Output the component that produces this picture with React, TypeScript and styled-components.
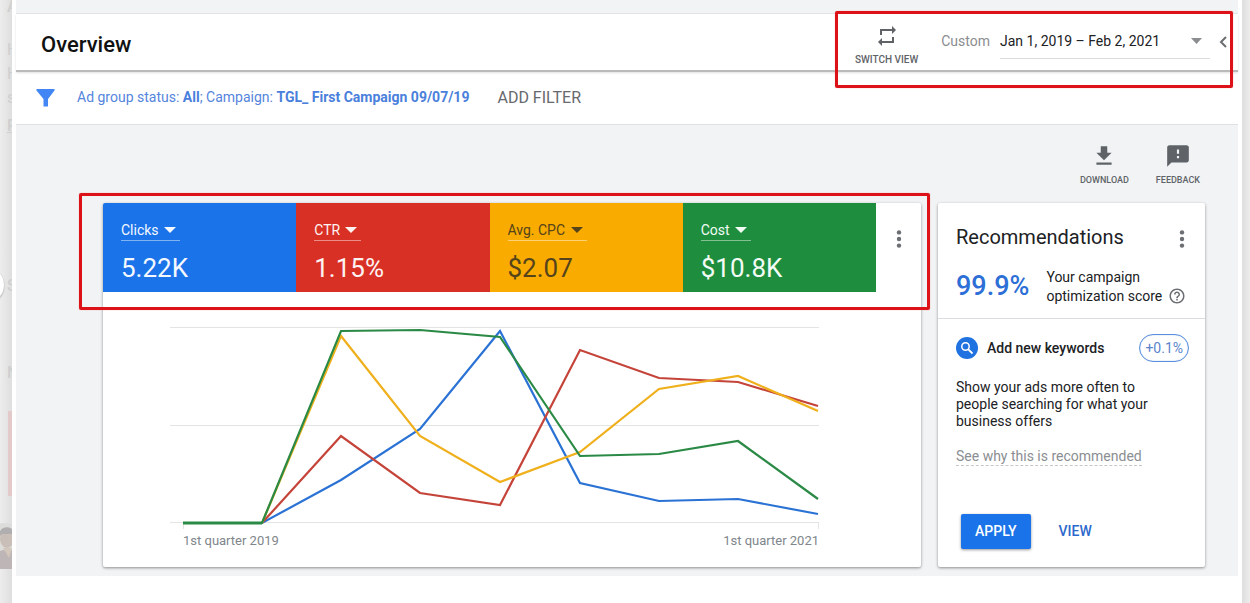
import React from 'react';
import styled, { createGlobalStyle } from 'styled-components';

const GlobalStyle = createGlobalStyle`
  *, *::before, *::after { box-sizing: border-box; }
  body {
    margin: 0;
    background: #ebebeb;
    font-family: Roboto, "Liberation Sans", sans-serif;
    color: #202124;
  }
  button, select { font: inherit; }
`;

const Page = styled.div`
  display: flex;
  min-height: 100vh;
`;

const Gutter = styled.aside<{ $side: 'left' | 'right' }>`
  position: relative;
  flex: none;
  width: ${p => (p.$side === 'left' ? 12 : 8)}px;
  overflow: hidden;
  background: linear-gradient(
    to ${p => (p.$side === 'left' ? 'right' : 'left')},
    #ededed,
    #dedede
  );
`;

const GhostList = styled.div`
  display: flex;
  flex-direction: column;
  width: 40px;
  padding-left: 7px;
  color: #cfcfcf;
`;

const Ghost = styled.span<{ $gap?: number; $strong?: boolean; $underline?: boolean }>`
  margin-top: ${p => p.$gap ?? 0}px;
  font-size: 16px;
  line-height: 24px;
  font-weight: ${p => (p.$strong ? 500 : 400)};
  text-decoration: ${p => (p.$underline ? 'underline' : 'none')};
`;

const GhostBanner = styled.span`
  height: 85px;
  margin: 26px 0 27px 1px;
  background: #e3c9c9;
`;

const Avatar = styled.svg`
  display: block;
  margin-left: -18px;
`;

const Handle = styled.span`
  position: absolute;
  top: 267px;
  left: -32px;
  width: 36px;
  height: 36px;
  border-radius: 50%;
  background: #fff;
  box-shadow: 0 1px 2px rgba(0, 0, 0, 0.3);
`;

const Dialog = styled.main`
  flex: 1;
  min-width: 0;
  padding: 0 4px;
  background: #fff;
`;

const TopStrip = styled.div`
  height: 14px;
  background: #f1f3f4;
  border-bottom: 1px solid #e4e5e8;
`;

const Header = styled.header`
  display: flex;
  align-items: center;
  justify-content: space-between;
  height: 58px;
  padding: 0 11px 0 25px;
  border-bottom: 2px solid #bababa;
  box-shadow: 0 1px 2px rgba(0, 0, 0, 0.12);
`;

const PageTitle = styled.h1`
  margin: 6px 0 0;
  font-size: 22px;
  line-height: 28px;
  font-weight: 500;
  color: #111;
`;

const HeaderTools = styled.div`
  position: relative;
  display: flex;
  align-items: center;
  height: 56px;
`;

const Highlight = styled.span<{ $inset: string }>`
  position: absolute;
  inset: ${p => p.$inset};
  border: 3px solid #dc1218;
  border-radius: 2px;
  box-shadow: 0 0 1px rgba(240, 60, 60, 0.7);
  pointer-events: none;
`;

const IconAction = styled.button<{ $size: number; $gap: number }>`
  display: flex;
  flex-direction: column;
  align-items: center;
  gap: ${p => p.$gap}px;
  padding: 0;
  border: 0;
  background: none;
  color: #5f6368;
  font-size: ${p => p.$size}px;
  line-height: 12px;
  font-weight: 500;
  text-transform: uppercase;
  cursor: pointer;
`;

const SwitchView = styled(IconAction)`
  padding-top: 6px;
`;

const DateField = styled.label`
  display: flex;
  align-items: center;
  gap: 10px;
  margin: 0 0 2px 23px;
  color: #8b8d90;
  font-size: 14px;
  line-height: 20px;
`;

const DateBox = styled.span`
  display: flex;
  align-items: center;
  justify-content: space-between;
  width: 210px;
  height: 36px;
  padding-right: 8px;
  border-bottom: 1px solid #dcdcdc;
`;

const PlainSelect = styled.select`
  appearance: none;
  margin: 0;
  padding: 0;
  border: 0;
  background: none;
  color: inherit;
  cursor: pointer;
`;

const DateSelect = styled(PlainSelect)`
  color: #202124;
`;

const IconButton = styled.button`
  display: flex;
  align-items: center;
  justify-content: center;
  padding: 0;
  border: 0;
  background: none;
  color: #6b6e72;
  cursor: pointer;
`;

const CollapseButton = styled(IconButton)`
  margin-left: 9px;
`;

const CardMenuButton = styled(IconButton)`
  padding-top: 4px;
`;

const FilterBar = styled.section`
  display: flex;
  align-items: center;
  height: 53px;
  padding: 0 20px;
  border-bottom: 1px solid #dfe1e3;
  font-size: 14px;
  line-height: 20px;
`;

const FilterSummary = styled.button`
  margin: 0 28px 0 22px;
  padding: 0 0 2px;
  border: 0;
  background: none;
  color: #5585dc;
  cursor: pointer;

  b {
    font-weight: 700;
    color: #4a80dc;
  }
`;

const AddFilter = styled.button`
  padding: 0;
  border: 0;
  background: none;
  color: #66696d;
  font-size: 16px;
  cursor: pointer;
`;

const Canvas = styled.section`
  padding: 18px 33px 9px 87px;
  background: #f1f3f4;
`;

const Toolbar = styled.div`
  display: flex;
  justify-content: flex-end;
  gap: 27px;
  padding: 0 5px 17px 0;
`;

const Cards = styled.div`
  display: grid;
  grid-template-columns: minmax(0, 1fr) 267px;
  gap: 17px;
`;

const Card = styled.article`
  background: #fff;
  border-radius: 2px;
  box-shadow: 0 1px 3px rgba(0, 0, 0, 0.42);
`;

const Scorecard = styled.div`
  position: relative;
  display: grid;
  grid-template-columns: repeat(4, minmax(0, 1fr)) 45px;
  height: 89px;
`;

const Tile = styled.div<{ $bg: string; $fg: string }>`
  display: flex;
  flex-direction: column;
  align-items: flex-start;
  padding: 17px 18px 0;
  background: ${p => p.$bg};
  color: ${p => p.$fg};

  &:first-child { border-top-left-radius: 2px; }
`;

const MetricPicker = styled.label`
  display: flex;
  align-items: center;
  gap: 5px;
  height: 21px;
  padding-right: 4px;
  border-bottom: 1px solid rgba(255, 255, 255, 0.45);
  font-size: 14px;
  line-height: 20px;
`;

const MetricValue = styled.output`
  margin-top: 11px;
  font-size: 26px;
  line-height: 32px;
`;

const MenuCell = styled.div`
  display: flex;
  justify-content: center;
  align-items: center;
  height: 71px;
`;

const ChartArea = styled.figure`
  margin: 0;
  padding: 29px 102px 16px 67px;
`;

const ChartSvg = styled.svg`
  display: block;
  width: 100%;
  height: auto;
`;

const AxisLabels = styled.figcaption`
  display: flex;
  justify-content: space-between;
  padding: 2px 0 0 13px;
  color: #80868b;
  font-size: 13px;
  line-height: 20px;
`;

const ScoreHeader = styled.header`
  display: flex;
  flex-direction: column;
  gap: 17px;
  height: 116px;
  padding: 20px 18px 0;
  border-bottom: 1px solid #dadce0;
`;

const CardTitleRow = styled.div`
  display: flex;
  align-items: center;
  justify-content: space-between;
  padding-right: 2px;
`;

const CardTitle = styled.h2`
  margin: 0;
  font-size: 20px;
  line-height: 28px;
  font-weight: 400;
`;

const ScoreRow = styled.div`
  display: flex;
  align-items: flex-start;
  gap: 17px;
`;

const Score = styled.strong`
  font-size: 27px;
  line-height: 36px;
  font-weight: 500;
  color: #2d6fd6;
`;

const ScoreText = styled.p`
  margin: 0;
  font-size: 14px;
  line-height: 19px;
  white-space: nowrap;
`;

const HelpIcon = styled.svg`
  margin: -2px 0 -1px 2px;
  vertical-align: -3px;
`;

const Suggestion = styled.div`
  display: flex;
  flex-direction: column;
  align-items: flex-start;
  padding: 15px 16px 18px 18px;
  font-size: 14px;
`;

const SuggestionHead = styled.div`
  display: flex;
  align-items: center;
  align-self: stretch;
  gap: 9px;
  line-height: 20px;
`;

const SuggestionTitle = styled.h3`
  flex: 1;
  margin: 0;
  font-size: 14px;
  font-weight: 500;
`;

const Uplift = styled.span`
  padding: 3px 5px;
  border: 1px solid #5a8fdb;
  border-radius: 14px;
  box-shadow: inset 0 0 1px #5a8fdb;
  color: #5a84cc;
  line-height: 20px;
`;

const SuggestionText = styled.p`
  max-width: 204px;
  margin: 17px 0;
  line-height: 17px;
`;

const WhyLink = styled.a`
  border-bottom: 1px dashed #c4c6c9;
  color: #8b8e92;
  line-height: 18px;
  text-decoration: none;
`;

const Actions = styled.div`
  display: flex;
  align-items: center;
  gap: 28px;
  margin: 48px 0 0 5px;
  line-height: 19px;
  font-weight: 500;
`;

const ApplyButton = styled.button`
  padding: 8px 14px;
  border: 0;
  border-radius: 2px;
  background: #1a73e8;
  box-shadow: 0 1px 3px rgba(0, 0, 0, 0.4);
  color: #fff;
  cursor: pointer;
`;

const ViewLink = styled.a`
  color: #2d69cc;
  text-decoration: none;
`;

const Caret = ({ width = 12 }: { width?: number }) => (
  <svg width={width} height="6" viewBox="0 0 12 6" preserveAspectRatio="none" aria-hidden="true">
    <path d="M0 0h12L6 6z" fill="currentColor" />
  </svg>
);

const MoreIcon = () => (
  <svg width="6" height="18" viewBox="0 0 6 18" fill="currentColor" aria-hidden="true">
    <circle cx="3" cy="2.4" r="2.2" />
    <circle cx="3" cy="9" r="2.2" />
    <circle cx="3" cy="15.6" r="2.2" />
  </svg>
);

const metrics = [
  { name: 'Clicks', value: '5.22K', bg: '#1a73e8', fg: '#f4f8ff' },
  { name: 'CTR', value: '1.15%', bg: '#d93025', fg: '#fdf3f2' },
  { name: 'Avg. CPC', value: '$2.07', bg: '#f9ab00', fg: '#54431b' },
  { name: 'Cost', value: '$10.8K', bg: '#1e8e3e', fg: '#f3fbf5' },
];

const quarters = [13, 92, 171, 250, 330, 410, 489, 568, 648];

const series = [
  { color: '#2a72d4', values: [202, 202, 159, 108, 10, 162, 180, 178, 193] },
  { color: '#c5443a', values: [202, 202, 115, 172, 184, 29, 57, 61, 85] },
  { color: '#efb01c', values: [202, 202, 15, 115, 161, 131, 68, 55, 90] },
  { color: '#2a8a45', values: [202, 202, 10, 9, 16, 135, 133, 120, 178] },
];

const TrendChart = () => (
  <ChartSvg viewBox="0 0 649 208" role="img" aria-label="Metrics by quarter">
    <path d="M0 6.5H649M0 104.5H649M0 201.5H649" stroke="#e3e4e4" fill="none" />
    <path d="M13.5 202v6M648.5 202v6" stroke="#e3e4e4" fill="none" />
    {series.map(s => (
      <polyline
        key={s.color}
        points={s.values.map((v, i) => `${quarters[i]},${v}`).join(' ')}
        fill="none"
        stroke={s.color}
        strokeWidth="2.2"
      />
    ))}
    <path d="M13 202H92" stroke="#2a8a45" strokeWidth="3" />
  </ChartSvg>
);

export default function App() {
  return (
    <>
      <GlobalStyle />
      <Page>
        <Gutter $side="left" aria-hidden="true">
          <GhostList>
            <Ghost $gap={-5} $strong>A</Ghost>
            <Ghost $gap={19}>H</Ghost>
            <Ghost>H</Ghost>
            <Ghost>s</Ghost>
            <Ghost $gap={4} $strong $underline>P</Ghost>
            <Ghost $gap={136} $strong>S</Ghost>
            <Ghost $gap={63} $strong>N</Ghost>
            <GhostBanner />
            <Avatar width="32" height="46" viewBox="0 0 32 46">
              <circle cx="15" cy="23" r="23" fill="#dcdcda" />
              <path d="M0 46V32l14-5h8l10 6v13z" fill="#bdb5b6" />
              <path d="M14 25h9l-3 10z" fill="#d3c7bb" />
              <ellipse cx="18" cy="16" rx="7" ry="9" fill="#c9bfb8" />
              <path d="M10 14c-1-13 16-13 17 0l-3-3H13z" fill="#b0aeae" />
            </Avatar>
          </GhostList>
          <Handle />
        </Gutter>

        <Dialog>
          <TopStrip />
          <Header>
            <PageTitle>Overview</PageTitle>
            <HeaderTools>
              <SwitchView type="button" $size={10} $gap={6}>
                <svg width="24" height="24" viewBox="0 0 24 24" fill="currentColor" aria-hidden="true">
                  <path d="M7 7h10v3l4-4-4-4v3H5v6h2V7zm10 10H7v-3l-4 4 4 4v-3h12v-6h-2v4z" />
                </svg>
                Switch view
              </SwitchView>
              <DateField>
                Custom
                <DateBox>
                  <DateSelect>
                    <option>Jan 1, 2019 – Feb 2, 2021</option>
                  </DateSelect>
                  <Caret width={11} />
                </DateBox>
              </DateField>
              <CollapseButton type="button" aria-label="Collapse">
                <svg width="8" height="12" viewBox="0 0 8 12" aria-hidden="true">
                  <path d="M7 1 2 6l5 5" fill="none" stroke="currentColor" strokeWidth="2" />
                </svg>
              </CollapseButton>
              <Highlight $inset="-3px -6px -18px -20px" />
            </HeaderTools>
          </Header>

          <FilterBar>
            <svg width="19" height="18" viewBox="0 0 19 18" aria-hidden="true">
              <path d="M.5 0h18v1.5L12 10v7.5H7.5V10L.5 1.5z" fill="#4285f4" />
            </svg>
            <FilterSummary type="button">
              Ad group status: <b>All</b>; Campaign: <b>TGL_ First Campaign 09/07/19</b>
            </FilterSummary>
            <AddFilter type="button">ADD FILTER</AddFilter>
          </FilterBar>

          <Canvas>
            <Toolbar>
              <IconAction type="button" $size={9} $gap={5}>
                <svg width="26" height="26" viewBox="0 0 24 24" fill="currentColor" aria-hidden="true">
                  <path d="M5 20h14v-2H5v2zM19 9h-4V3H9v6H5l7 7 7-7z" />
                </svg>
                Download
              </IconAction>
              <IconAction type="button" $size={9} $gap={5}>
                <svg width="26" height="26" viewBox="0 0 24 24" fill="currentColor" aria-hidden="true">
                  <path d="M20 2H4c-1.1 0-1.99.9-1.99 2L2 22l4-4h14c1.1 0 2-.9 2-2V4c0-1.1-.9-2-2-2zm-7 12h-2v-2h2v2zm0-4h-2V6h2v4z" />
                </svg>
                Feedback
              </IconAction>
            </Toolbar>

            <Cards>
              <Card>
                <Scorecard>
                  {metrics.map(m => (
                    <Tile key={m.name} $bg={m.bg} $fg={m.fg}>
                      <MetricPicker>
                        <PlainSelect aria-label="Metric">
                          <option>{m.name}</option>
                        </PlainSelect>
                        <Caret />
                      </MetricPicker>
                      <MetricValue>{m.value}</MetricValue>
                    </Tile>
                  ))}
                  <MenuCell>
                    <IconButton type="button" aria-label="Chart options">
                      <MoreIcon />
                    </IconButton>
                  </MenuCell>
                  <Highlight $inset="-10px -9px -18px -24px" />
                </Scorecard>
                <ChartArea>
                  <TrendChart />
                  <AxisLabels>
                    <span>1st quarter 2019</span>
                    <span>1st quarter 2021</span>
                  </AxisLabels>
                </ChartArea>
              </Card>

              <Card>
                <ScoreHeader>
                  <CardTitleRow>
                    <CardTitle>Recommendations</CardTitle>
                    <CardMenuButton type="button" aria-label="Recommendation options">
                      <MoreIcon />
                    </CardMenuButton>
                  </CardTitleRow>
                  <ScoreRow>
                    <Score>99.9%</Score>
                    <ScoreText>
                      Your campaign
                      <br />
                      optimization score{' '}
                      <HelpIcon width="18" height="18" viewBox="0 0 24 24" fill="#6b6e72" aria-hidden="true">
                        <path d="M11 18h2v-2h-2v2zm1-16C6.48 2 2 6.48 2 12s4.48 10 10 10 10-4.48 10-10S17.52 2 12 2zm0 18c-4.41 0-8-3.59-8-8s3.59-8 8-8 8 3.59 8 8-3.59 8-8 8zm0-14c-2.21 0-4 1.79-4 4h2c0-1.1.9-2 2-2s2 .9 2 2c0 2-3 1.75-3 5h2c0-2.25 3-2.5 3-5 0-2.21-1.79-4-4-4z" />
                      </HelpIcon>
                    </ScoreText>
                  </ScoreRow>
                </ScoreHeader>
                <Suggestion>
                  <SuggestionHead>
                    <svg width="22" height="22" viewBox="0 0 22 22" aria-hidden="true">
                      <circle cx="11" cy="11" r="11" fill="#1f72e0" />
                      <circle cx="9.5" cy="9.5" r="3.7" fill="none" stroke="#fff" strokeWidth="1.5" />
                      <path d="m12.3 12.3 4.2 4.2" stroke="#fff" strokeWidth="1.8" />
                    </svg>
                    <SuggestionTitle>Add new keywords</SuggestionTitle>
                    <Uplift>+0.1%</Uplift>
                  </SuggestionHead>
                  <SuggestionText>
                    Show your ads more often to people searching for what your business offers
                  </SuggestionText>
                  <WhyLink href="#why">See why this is recommended</WhyLink>
                  <Actions>
                    <ApplyButton type="button">APPLY</ApplyButton>
                    <ViewLink href="#view">VIEW</ViewLink>
                  </Actions>
                </Suggestion>
              </Card>
            </Cards>
          </Canvas>
        </Dialog>

        <Gutter $side="right" aria-hidden="true" />
      </Page>
    </>
  );
}
